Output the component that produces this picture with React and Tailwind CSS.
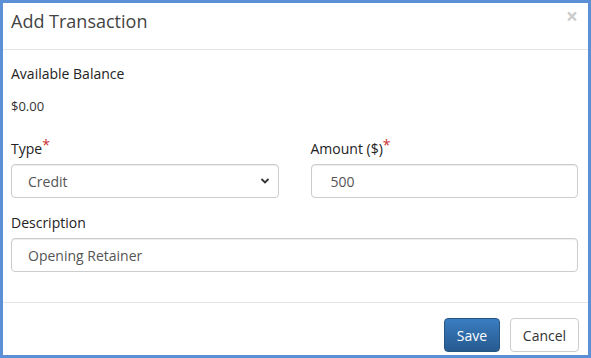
import { useState } from 'react'

const font = { fontFamily: '"Open Sans", "Liberation Sans", sans-serif' }

export default function App() {
  const [type, setType] = useState('Credit')
  const [amount, setAmount] = useState('500')
  const [desc, setDesc] = useState('Opening Retainer')

  return (
    <div style={font} className="flex h-[358px] w-[591px] flex-col border-[3px] border-[#5b8fd6] bg-white text-[#333]">
      {/* header */}
      <div className="flex h-[47px] shrink-0 justify-between border-b border-[#e5e5e5] pl-[8px] pr-[10px]">
        <h4 className="mt-[4px] text-[18px] leading-[28px] text-[#444]">Add Transaction</h4>
        <button className="mt-[3px] h-[20px] text-[21px] font-bold leading-[20px] text-black opacity-20">×</button>
      </div>

      {/* body */}
      <div className="flex-1 pl-[8px] pr-[10px] pt-[14px]">
        <p className="text-[14px] font-medium leading-[20px] text-[#222]">Available Balance</p>
        <p className="mt-[12px] text-[13px] leading-[20px]">$0.00</p>

        <div className="mt-[23px] grid grid-cols-2 gap-x-[32px]">
          <div>
            <label className="block text-[14px] font-medium leading-[20px] text-[#222]">
              Type<span className="relative -top-[4px] text-[#c9302c]">*</span>
            </label>
            <div className="relative mt-[5px]">
              <select
                value={type}
                onChange={(e) => setType(e.target.value)}
                className="h-[34px] w-full appearance-none rounded-[4px] border border-[#ccc] bg-white pl-[16px] text-[14px] text-[#555] shadow-[inset_0_1px_1px_rgba(0,0,0,0.075)] outline-none"
              >
                <option>Credit</option>
                <option>Debit</option>
              </select>
              <svg className="pointer-events-none absolute right-[9px] top-[13px]" width="10" height="8" viewBox="0 0 10 8">
                <path d="M1.5 2 L5 5.5 L8.5 2" fill="none" stroke="#333" strokeWidth="1.8" />
              </svg>
            </div>
          </div>
          <div>
            <label className="block text-[14px] font-medium leading-[20px] text-[#222]">
              Amount ($)<span className="relative -top-[4px] text-[#c9302c]">*</span>
            </label>
            <input
              value={amount}
              onChange={(e) => setAmount(e.target.value)}
              className="mt-[5px] h-[34px] w-full rounded-[4px] border border-[#ccc] pl-[19px] text-[14px] text-[#555] shadow-[inset_0_1px_1px_rgba(0,0,0,0.075)] outline-none"
            />
          </div>
        </div>

        <label className="mt-[15px] block text-[14px] font-medium leading-[20px] text-[#222]">Description</label>
        <input
          value={desc}
          onChange={(e) => setDesc(e.target.value)}
          className="mt-[5px] h-[34px] w-full rounded-[4px] border border-[#ccc] pl-[16px] text-[14px] text-[#555] shadow-[inset_0_1px_1px_rgba(0,0,0,0.075)] outline-none"
        />
      </div>

      {/* footer */}
      <div className="flex h-[53px] shrink-0 items-start justify-end gap-[10px] border-t border-[#e5e5e5] pr-[9px] pt-[15px]">
        <button className="h-[34px] w-[56px] rounded-[4px] border border-[#245580] bg-gradient-to-b from-[#3a7dc1] to-[#265a8f] text-[14px] font-medium text-white">
          Save
        </button>
        <button className="h-[34px] w-[69px] rounded-[4px] border border-[#ccc] bg-white text-[14px] text-[#333]">
          Cancel
        </button>
      </div>
    </div>
  )
}
